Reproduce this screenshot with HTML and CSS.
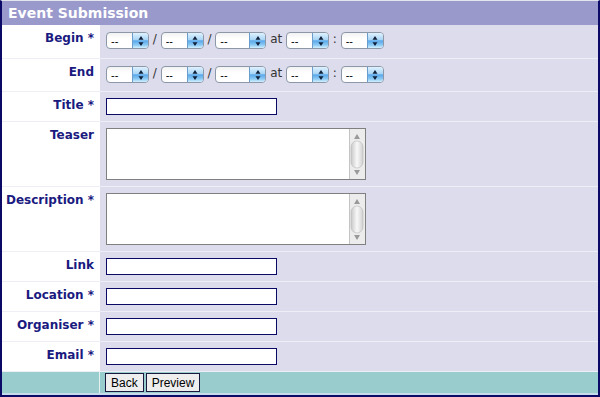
FILE: index.html
```html
<!DOCTYPE html>
<html lang="en">
<head>
    <meta charset="UTF-8">
    <meta name="viewport" content="width=device-width, initial-scale=1.0">
    <title>Event Submission</title>
    <link rel="stylesheet" href="styles.css">
</head>
<body>
    <div class="frame">
        <div class="title">Event Submission</div>
        <form class="form" onsubmit="return false">
            <div class="row row-date">
                <label class="label">Begin *</label>
                <div class="field">
                    <span class="dd"><select><option>--</option></select><span class="spin"><svg width="14" height="14" viewBox="0 0 14 14"><path d="M7 2 L9.5 5.8 H4.5Z M4.5 8.2 H9.5 L7 12Z" fill="#10203a"/></svg></span></span> /
                    <span class="dd"><select><option>--</option></select><span class="spin"><svg width="14" height="14" viewBox="0 0 14 14"><path d="M7 2 L9.5 5.8 H4.5Z M4.5 8.2 H9.5 L7 12Z" fill="#10203a"/></svg></span></span> /
                    <span class="dd dd-year"><select><option>--</option></select><span class="spin"><svg width="14" height="14" viewBox="0 0 14 14"><path d="M7 2 L9.5 5.8 H4.5Z M4.5 8.2 H9.5 L7 12Z" fill="#10203a"/></svg></span></span>
                    at
                    <span class="dd"><select><option>--</option></select><span class="spin"><svg width="14" height="14" viewBox="0 0 14 14"><path d="M7 2 L9.5 5.8 H4.5Z M4.5 8.2 H9.5 L7 12Z" fill="#10203a"/></svg></span></span> :
                    <span class="dd"><select><option>--</option></select><span class="spin"><svg width="14" height="14" viewBox="0 0 14 14"><path d="M7 2 L9.5 5.8 H4.5Z M4.5 8.2 H9.5 L7 12Z" fill="#10203a"/></svg></span></span>
                </div>
            </div>
            <div class="row row-date row-end">
                <label class="label">End</label>
                <div class="field">
                    <span class="dd"><select><option>--</option></select><span class="spin"><svg width="14" height="14" viewBox="0 0 14 14"><path d="M7 2 L9.5 5.8 H4.5Z M4.5 8.2 H9.5 L7 12Z" fill="#10203a"/></svg></span></span> /
                    <span class="dd"><select><option>--</option></select><span class="spin"><svg width="14" height="14" viewBox="0 0 14 14"><path d="M7 2 L9.5 5.8 H4.5Z M4.5 8.2 H9.5 L7 12Z" fill="#10203a"/></svg></span></span> /
                    <span class="dd dd-year"><select><option>--</option></select><span class="spin"><svg width="14" height="14" viewBox="0 0 14 14"><path d="M7 2 L9.5 5.8 H4.5Z M4.5 8.2 H9.5 L7 12Z" fill="#10203a"/></svg></span></span>
                    at
                    <span class="dd"><select><option>--</option></select><span class="spin"><svg width="14" height="14" viewBox="0 0 14 14"><path d="M7 2 L9.5 5.8 H4.5Z M4.5 8.2 H9.5 L7 12Z" fill="#10203a"/></svg></span></span> :
                    <span class="dd"><select><option>--</option></select><span class="spin"><svg width="14" height="14" viewBox="0 0 14 14"><path d="M7 2 L9.5 5.8 H4.5Z M4.5 8.2 H9.5 L7 12Z" fill="#10203a"/></svg></span></span>
                </div>
            </div>
            <div class="row">
                <label class="label" for="title">Title *</label>
                <div class="field"><input type="text" id="title"></div>
            </div>
            <div class="row row-text">
                <label class="label" for="teaser">Teaser</label>
                <div class="field">
                    <div class="ta">
                        <textarea id="teaser"></textarea>
                        <svg class="sb" width="16" height="50" viewBox="0 0 16 50">
                            <defs>
                                <linearGradient id="thumb1" x1="0" x2="1" y1="0" y2="0">
                                    <stop offset="0" stop-color="#c8c8c8"/>
                                    <stop offset="0.5" stop-color="#f8f8f8"/>
                                    <stop offset="1" stop-color="#d0d0d0"/>
                                </linearGradient>
                            </defs>
                            <rect x="0" y="0" width="16" height="50" fill="#ececec"/>
                            <line x1="0.5" y1="0" x2="0.5" y2="50" stroke="#c4c4c4"/>
                            <path d="M8 5 L11 10 H5Z" fill="#9a9a9a"/>
                            <rect x="2" y="12" width="12" height="27" rx="6" fill="url(#thumb1)" stroke="#b8b8b8" stroke-width="0.6"/>
                            <path d="M5 41 H11 L8 46Z" fill="#9a9a9a"/>
                        </svg>
                    </div>
                </div>
            </div>
            <div class="row row-text">
                <label class="label" for="description">Description *</label>
                <div class="field">
                    <div class="ta">
                        <textarea id="description"></textarea>
                        <svg class="sb" width="16" height="50" viewBox="0 0 16 50">
                            <defs>
                                <linearGradient id="thumb2" x1="0" x2="1" y1="0" y2="0">
                                    <stop offset="0" stop-color="#c8c8c8"/>
                                    <stop offset="0.5" stop-color="#f8f8f8"/>
                                    <stop offset="1" stop-color="#d0d0d0"/>
                                </linearGradient>
                            </defs>
                            <rect x="0" y="0" width="16" height="50" fill="#ececec"/>
                            <line x1="0.5" y1="0" x2="0.5" y2="50" stroke="#c4c4c4"/>
                            <path d="M8 5 L11 10 H5Z" fill="#9a9a9a"/>
                            <rect x="2" y="12" width="12" height="27" rx="6" fill="url(#thumb2)" stroke="#b8b8b8" stroke-width="0.6"/>
                            <path d="M5 41 H11 L8 46Z" fill="#9a9a9a"/>
                        </svg>
                    </div>
                </div>
            </div>
            <div class="row">
                <label class="label" for="link">Link</label>
                <div class="field"><input type="text" id="link"></div>
            </div>
            <div class="row">
                <label class="label" for="location">Location *</label>
                <div class="field"><input type="text" id="location"></div>
            </div>
            <div class="row">
                <label class="label" for="organiser">Organiser *</label>
                <div class="field"><input type="text" id="organiser"></div>
            </div>
            <div class="row">
                <label class="label" for="email">Email *</label>
                <div class="field"><input type="text" id="email"></div>
            </div>
            <div class="row row-buttons">
                <div class="label"></div>
                <div class="field">
                    <button type="button">Back</button>
                    <button type="submit">Preview</button>
                </div>
            </div>
        </form>
    </div>
</body>
</html>
```

FILE: styles.css
```css
body {
    margin: 0;
    font-family: "DejaVu Sans", Verdana, sans-serif;
    background-color: #ffffff;
}
.frame {
    width: 600px;
    height: 397px;
    box-sizing: border-box;
    border-top: 1px solid #e4e4ec;
    border-left: 2px solid #0a0a66;
    border-right: 2px solid #0a0a66;
    border-bottom: 2px solid #0a0a66;
}
.title {
    height: 24px;
    box-sizing: border-box;
    padding: 4px 6px 0;
    background-color: #9999cc;
    color: #ffffff;
    font-weight: bold;
    font-size: 14px;
}
.form {
    margin: 0;
}
.row {
    display: grid;
    grid-template-columns: 98px 1fr;
    height: 30px;
    box-sizing: border-box;
    border-bottom: 1px solid #eeeef6;
}
.row-date {
    height: 34px;
}
.row-end {
    height: 33px;
}
.row-text {
    height: 65px;
}
.label {
    display: block;
    background-color: #ffffff;
    color: #1a1a80;
    font-weight: bold;
    font-size: 12px;
    text-align: right;
    padding: 6px 6px 0 0;
}
.field {
    background-color: #dcdcec;
    padding: 6px 0 0 6px;
    font-size: 12px;
    color: #333333;
    white-space: nowrap;
}
.row-date .field {
    padding-top: 7px;
}

/* date dropdowns */
.dd {
    display: inline-flex;
    vertical-align: top;
    width: 43px;
    height: 17px;
    box-sizing: border-box;
    border: 1px solid #8c98a8;
    border-radius: 4px;
    background: linear-gradient(#f2f2f2, #ffffff 40%);
    overflow: hidden;
}
.dd-year {
    width: 51px;
}
.dd select {
    flex: 1;
    min-width: 0;
    -webkit-appearance: none;
    appearance: none;
    border: none;
    background: transparent;
    font-family: "Liberation Sans", Arial, sans-serif;
    font-size: 11px;
    padding: 0 0 0 4px;
    color: #000000;
    outline: none;
}
.spin {
    display: flex;
    align-items: center;
    justify-content: center;
    width: 15px;
    border-left: 1px solid #6a9ccc;
    background: linear-gradient(#dff1fd, #a9d6f7 45%, #5aa8ea 52%, #8ccaf4 80%, #d2f0ff);
}

/* text inputs */
input[type="text"] {
    display: block;
    width: 171px;
    height: 17px;
    box-sizing: border-box;
    border: 1px solid #0a0a66;
    padding: 0 2px;
    background-color: #ffffff;
    font-size: 11px;
}

/* textareas with scrollbar */
.ta {
    display: flex;
    width: 260px;
    height: 52px;
    box-sizing: border-box;
    border: 1px solid #808080;
    background-color: #ffffff;
}
.ta textarea {
    flex: 1;
    border: none;
    resize: none;
    overflow: hidden;
    padding: 2px;
    outline: none;
}
.sb {
    display: block;
}

/* buttons row */
.row-buttons {
    height: 23px;
    border-bottom: 2px solid #c6dcec;
}
.row-buttons .label,
.row-buttons .field {
    background-color: #99cccc;
}
.row-buttons .label {
    border-right: 1px solid #e6f0f0;
}
.row-buttons .field {
    display: flex;
    gap: 2px;
    padding: 1px 0 0 5px;
}
button {
    height: 19px;
    padding: 0 5px;
    border: 1px solid #1a1a40;
    background-color: #eeeeee;
    font-family: "Liberation Sans", Arial, sans-serif;
    font-size: 12px;
    color: #000000;
}
```
